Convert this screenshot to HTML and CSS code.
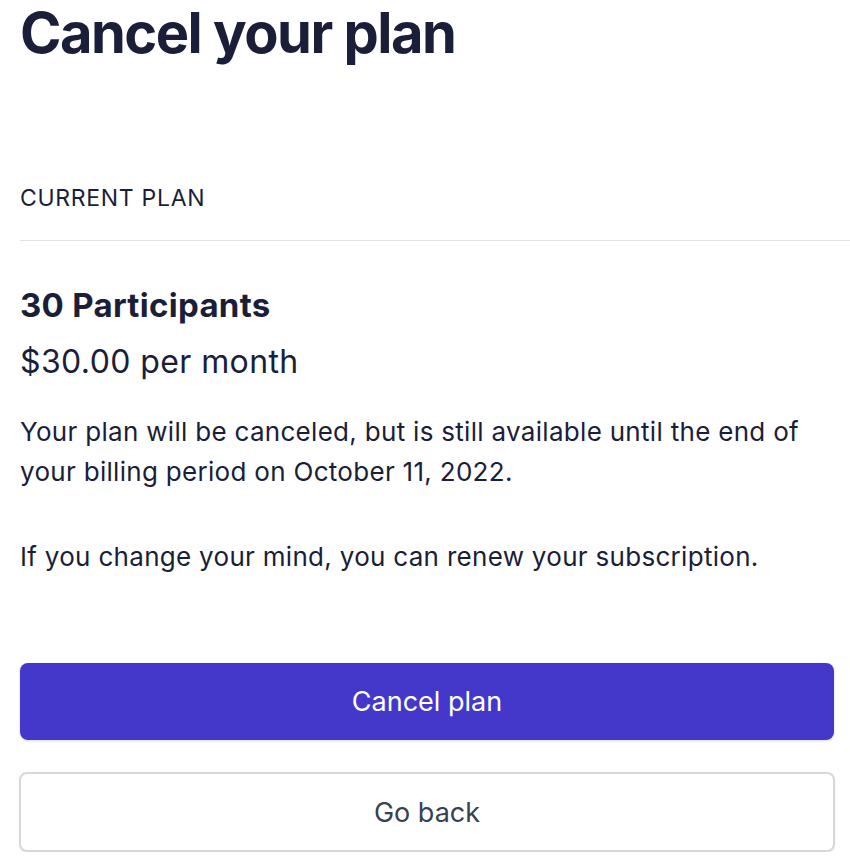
FILE: index.html
```html
<!DOCTYPE html>
<html lang="en">
<head>
    <meta charset="UTF-8">
    <meta name="viewport" content="width=device-width, initial-scale=1.0">
    <title>Cancel your plan</title>
    <link rel="stylesheet" href="styles.css">
</head>
<body>
    <div class="page">
        <h1>Cancel your plan</h1>
        <div class="section-label">CURRENT PLAN</div>
        <div class="plan">
            <h2>30 Participants</h2>
            <p class="price">$30.00 per month</p>
            <p class="note">Your plan will be canceled, but is still available until the end of your billing period on October 11, 2022.</p>
            <p class="note">If you change your mind, you can renew your subscription.</p>
        </div>
        <div class="actions">
            <button class="primary">Cancel plan</button>
            <button class="secondary">Go back</button>
        </div>
    </div>
</body>
</html>
```

FILE: styles.css
```css
body {
    font-family: Inter, "Noto Sans", sans-serif;
    background-color: #ffffff;
    color: #1a1e38;
    margin: 0;
}
.page {
    padding: 0 16px 0 20px;
}
h1 {
    font-size: 56px;
    line-height: 1;
    font-weight: 700;
    letter-spacing: -1.5px;
    margin: 5px 0 0;
}
.section-label {
    font-size: 23px;
    line-height: 30px;
    letter-spacing: 0.7px;
    margin-top: 122px;
    padding-bottom: 27px;
    border-bottom: 1px solid #e2e4e8;
    margin-right: -16px;
}
.plan {
    padding-top: 44px;
}
h2 {
    font-size: 33px;
    line-height: 40px;
    font-weight: 700;
    letter-spacing: 0.3px;
    margin: 0;
}
.price {
    font-size: 32px;
    line-height: 40px;
    letter-spacing: 0.4px;
    margin: 17px 0 0;
}
.note {
    font-size: 26px;
    line-height: 40px;
    letter-spacing: 0.3px;
    margin: 30px 0 0;
}
.note + .note {
    margin-top: 45px;
}
.actions {
    display: flex;
    flex-direction: column;
    gap: 32px;
    margin-top: 86px;
}
button {
    font-family: inherit;
    font-size: 27px;
    height: 77px;
    border-radius: 8px;
    cursor: pointer;
}
.primary {
    background-color: #4338ca;
    color: #ffffff;
    border: none;
    box-shadow: 0 1px 3px rgba(0, 0, 0, 0.15);
}
.secondary {
    background-color: #ffffff;
    color: #374151;
    border: 2px solid #d6d8de;
    height: 80px;
    margin: 0 -1px;
    box-shadow: 0 1px 2px rgba(0, 0, 0, 0.08);
}
```
